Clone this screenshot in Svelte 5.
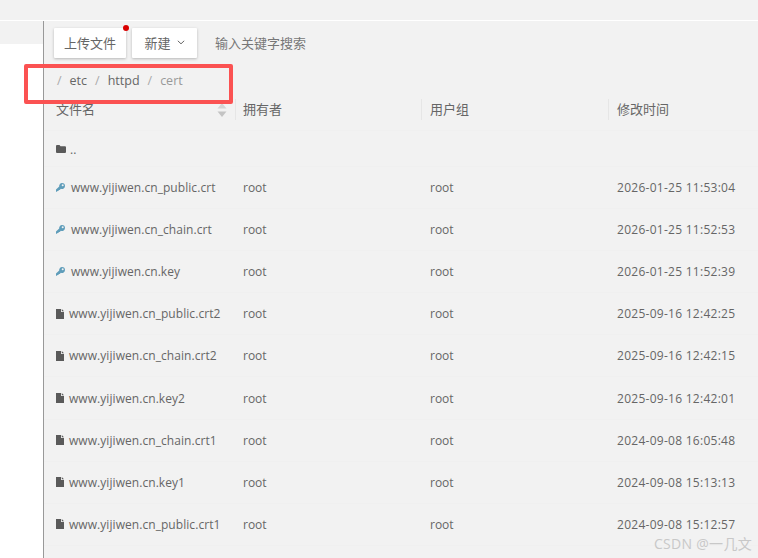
<script>
	const rows = [
		{ name: 'www.yijiwen.cn_public.crt', time: '2026-01-25 11:53:04', kind: 'key' },
		{ name: 'www.yijiwen.cn_chain.crt', time: '2026-01-25 11:52:53', kind: 'key' },
		{ name: 'www.yijiwen.cn.key', time: '2026-01-25 11:52:39', kind: 'key' },
		{ name: 'www.yijiwen.cn_public.crt2', time: '2025-09-16 12:42:25', kind: 'file' },
		{ name: 'www.yijiwen.cn_chain.crt2', time: '2025-09-16 12:42:15', kind: 'file' },
		{ name: 'www.yijiwen.cn.key2', time: '2025-09-16 12:42:01', kind: 'file' },
		{ name: 'www.yijiwen.cn_chain.crt1', time: '2024-09-08 16:05:48', kind: 'file' },
		{ name: 'www.yijiwen.cn.key1', time: '2024-09-08 15:13:13', kind: 'file' },
		{ name: 'www.yijiwen.cn_public.crt1', time: '2024-09-08 15:12:57', kind: 'file' }
	];
</script>

<div class="page">
	<div class="topbar"></div>
	<div class="body">
		<aside class="side">
			<div class="side-top"></div>
		</aside>
		<main class="content">
			<div class="toolbar">
				<button class="btn upload">上传文件<span class="dot"></span></button>
				<button class="btn create">
					新建
					<svg width="8" height="5" viewBox="0 0 8 5"><path d="M.8.8 4 3.800 7.200.8" fill="none" stroke="#666" stroke-width="1" /></svg>
				</button>
				<span class="search">输入关键字搜索</span>
			</div>

			<div class="crumbs">
				<span class="sep">/</span><span>etc</span><span class="sep">/</span><span>httpd</span><span class="sep">/</span><span class="current">cert</span>
			</div>

			<div class="row head">
				<div class="cell name">
					文件名
					<span class="sort">
						<svg width="10" height="14" viewBox="0 0 10 14">
							<path d="M5 0 9.500 5.500H.5Z" fill="#d4d4d4" />
							<path d="M5 14 .5 8.500H9.500Z" fill="#c4c4c4" />
						</svg>
					</span>
				</div>
				<div class="cell owner">拥有者</div>
				<div class="cell group">用户组</div>
				<div class="cell time">修改时间</div>
			</div>

			<div class="row parent">
				<div class="cell name">
					<svg class="icon" width="10" height="8" viewBox="0 0 10 8"><path d="M0 1a1 1 0 0 1 1-1h2.500l1 1.200H9a1 1 0 0 1 1 1V7a1 1 0 0 1-1 1H1a1 1 0 0 1-1-1Z" fill="#5a5a5a" /></svg>
					<span class="parent-label">..</span>
				</div>
			</div>

			{#each rows as row}
				<div class="row">
					<div class="cell name">
						{#if row.kind === 'key'}
							<svg class="icon key" width="9" height="9" viewBox="0 0 9 9"><path d="M6 0a3 3 0 0 1 3 3 3 3 0 0 1-4.100 2.700L3.700 7H2.600v1H1.500l-.6.700H0V6.600l3.200-3A3 3 0 0 1 6 0Zm.7 1.300a1 1 0 1 0 0 2 1 1 0 0 0 0-2Z" fill="#5f9dba" fill-rule="evenodd" /></svg>
						{:else}
							<svg class="icon file" width="8" height="10" viewBox="0 0 8 10"><path d="M0 0h5v3h3v7H0ZM5.800 0 8 2.200H5.800Z" fill="#5a5a5a" /></svg>
						{/if}
						<span class="filename">{row.name}</span>
					</div>
					<div class="cell owner">root</div>
					<div class="cell group">root</div>
					<div class="cell time stamp">{row.time}</div>
				</div>
			{/each}
		</main>
	</div>

	<div class="highlight"></div>
	<div class="watermark">CSDN @一几文</div>
</div>

<style>
	:global(body) {
		margin: 0;
		background: #f2f2f2;
	}

	.page {
		position: relative;
		width: 758px;
		height: 558px;
		overflow: hidden;
		font-family: 'Open Sans', 'Noto Sans CJK SC', sans-serif;
		font-size: 12px;
		color: #666;
	}

	.topbar {
		height: 20px;
		border-bottom: 1px solid #fff;
	}

	.body {
		display: flex;
		height: 537px;
	}

	.side {
		width: 43px;
		background: #fff;
		border-right: 1px solid #999;
		flex: none;
	}

	.side-top {
		height: 23px;
		background: #f2f2f2;
	}

	.content {
		flex: 1;
		min-width: 0;
	}

	.toolbar {
		display: flex;
		align-items: center;
		gap: 6px;
		padding: 7px 0 0 10px;
		height: 30px;
		font-size: 13px;
	}

	.btn {
		position: relative;
		height: 30px;
		padding: 0 0 2px;
		border: none;
		border-radius: 1px;
		background: #fff;
		box-shadow: 0 1px 3px rgba(0, 0, 0, 0.25);
		font: inherit;
		color: #666;
	}

	.upload {
		width: 72px;
	}

	.create {
		display: flex;
		align-items: center;
		justify-content: center;
		gap: 6px;
		width: 65px;
	}

	.dot {
		position: absolute;
		top: -3px;
		right: -3px;
		width: 6px;
		height: 6px;
		border-radius: 50%;
		background: #d90000;
	}

	.search {
		margin: 0 0 2px 12px;
		color: #777;
	}

	.crumbs {
		display: flex;
		gap: 8px;
		padding: 14px 0 0 13px;
		height: 18px;
		font-size: 12.500px;
		color: #666;
	}

	.sep {
		color: #aaa;
	}

	.current {
		color: #999;
	}

	.row {
		display: grid;
		grid-template-columns: 191px 186px 187px 1fr;
		align-items: center;
		height: 42.100px;
		border-bottom: 1px solid #f0f0f0;
		box-sizing: border-box;
	}

	.head {
		height: 41px;
		padding-bottom: 3px;
	}

	.parent {
		height: 36px;
	}

	.cell {
		display: flex;
		align-items: center;
		box-sizing: border-box;
		height: 100%;
		padding-left: 8px;
		white-space: nowrap;
	}

	.cell.name {
		padding-left: 12px;
	}

	.cell.group,
	.cell.time {
		padding-left: 9px;
	}

	.filename {
		letter-spacing: 0.060px;
	}

	.stamp {
		letter-spacing: 0.270px;
	}

	.head .cell {
		position: relative;
		font-size: 13px;
	}

	.head .owner::before,
	.head .group::before,
	.head .time::before {
		content: '';
		position: absolute;
		left: 0;
		top: 9px;
		height: 21px;
		border-left: 1px solid #e6e6e6;
	}

	.sort {
		position: absolute;
		right: 8px;
		top: 13px;
		display: flex;
	}

	.icon {
		flex: none;
	}

	.parent-label {
		margin-left: 4px;
		margin-top: 1px;
	}

	.key {
		margin-right: 6px;
	}

	.file {
		margin-right: 5px;
	}

	.highlight {
		position: absolute;
		left: 24px;
		top: 64px;
		width: 209px;
		height: 40px;
		box-sizing: border-box;
		border: 4px solid #fb5252;
		border-radius: 2px;
	}

	.watermark {
		position: absolute;
		right: 6px;
		bottom: 5px;
		font-size: 14px;
		letter-spacing: 0.300px;
		color: #c8c8c8;
	}
</style>
